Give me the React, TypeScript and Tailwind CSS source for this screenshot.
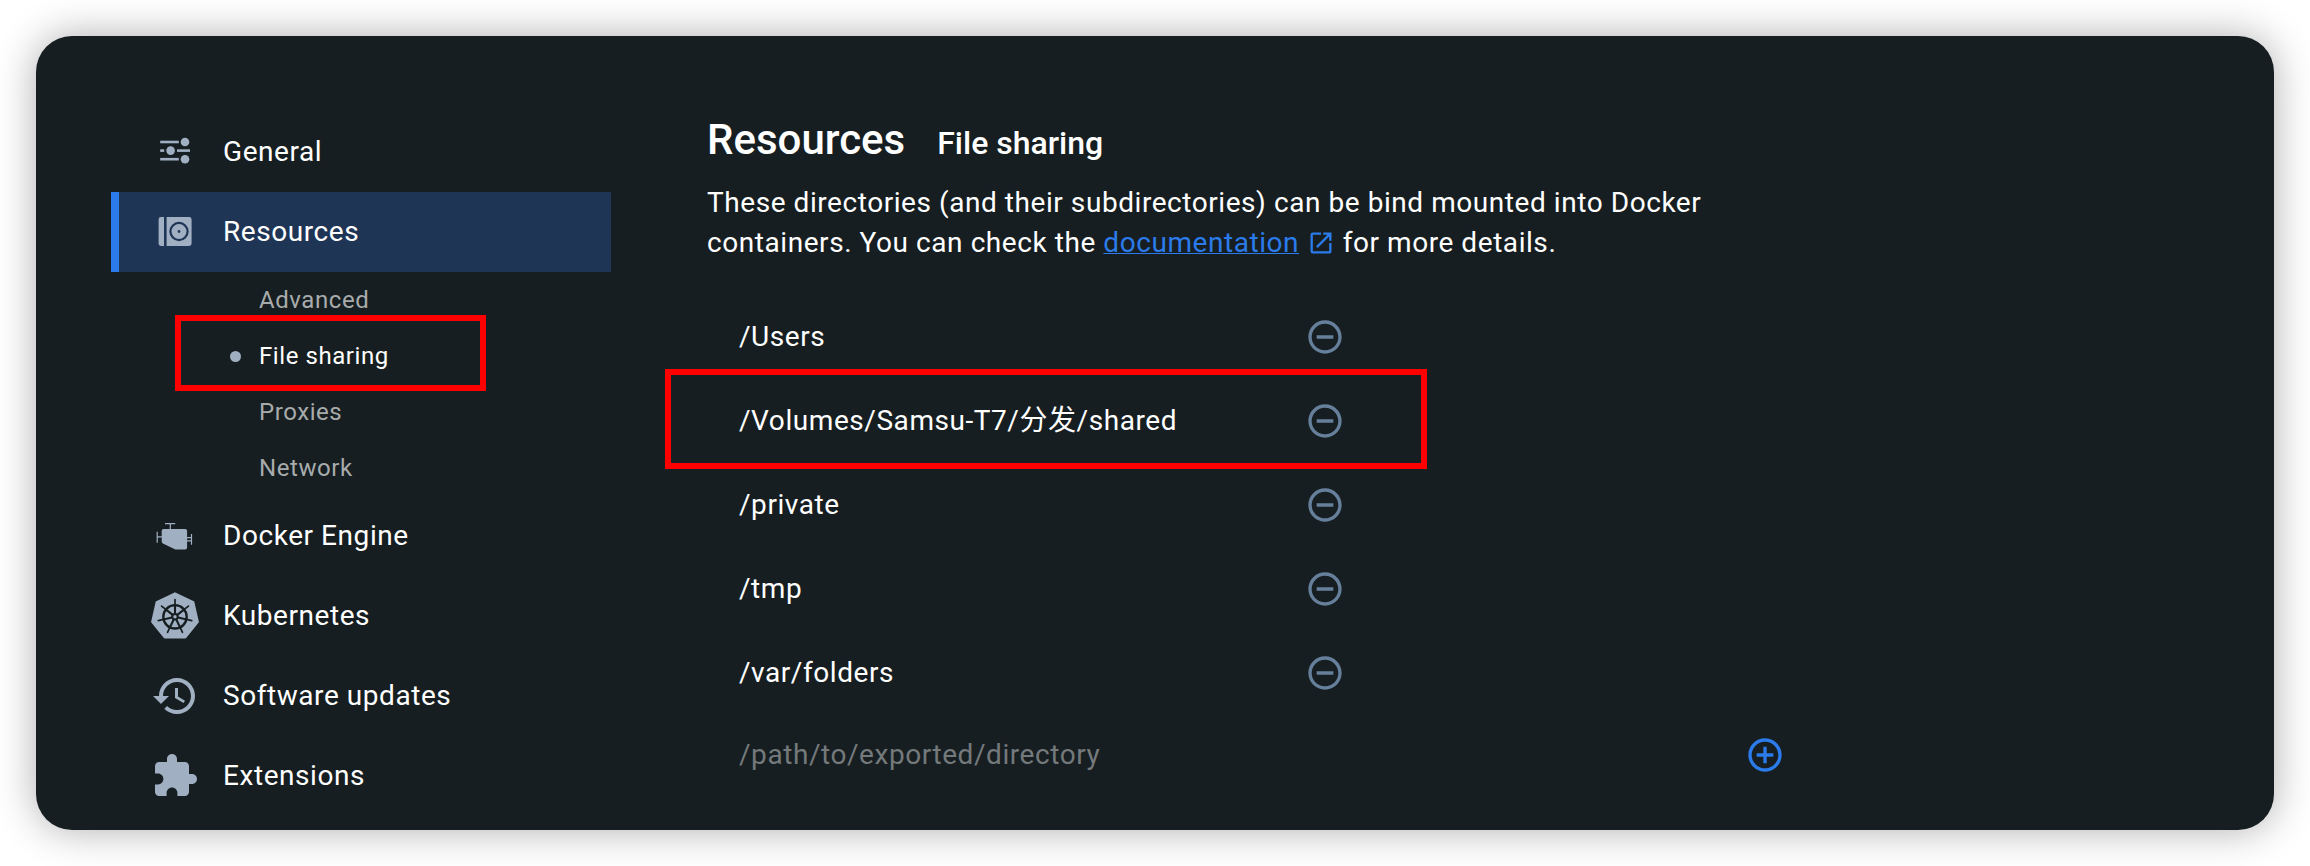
import type { ReactNode } from "react";
import { MdAddCircleOutline, MdOpenInNew, MdRemoveCircleOutline } from "react-icons/md";

function TuneIcon() {
  return (
    <svg viewBox="0 0 48 48" className="size-12" fill="currentColor">
      <rect x="9.2" y="12.7" width="18.6" height="2.6" />
      <circle cx="34" cy="14" r="4.3" />
      <rect x="9.2" y="21.3" width="4" height="2.6" />
      <circle cx="19.6" cy="22.6" r="4.3" />
      <rect x="26" y="21.3" width="13" height="2.6" />
      <rect x="9.2" y="29.9" width="18.6" height="2.6" />
      <circle cx="34" cy="31.2" r="4.3" />
    </svg>
  );
}

function DiskIcon() {
  return (
    <svg viewBox="0 0 48 48" className="size-12" fill="currentColor">
      <path d="M13 9.1V38H10a2.4 2.4 0 0 1-2.4-2.4V11.5A2.4 2.4 0 0 1 10 9.1Z" />
      <path
        fillRule="evenodd"
        d="M15.6 9.1h22.6a2.4 2.4 0 0 1 2.4 2.4v24.1a2.4 2.4 0 0 1-2.4 2.4H15.6ZM28 13.8a9.7 9.7 0 1 0 0 19.4a9.7 9.7 0 1 0 0-19.4Z"
      />
      <path
        fillRule="evenodd"
        d="M28 16a7.5 7.5 0 1 0 0 15a7.5 7.5 0 1 0 0-15ZM28 22.1a1.4 1.4 0 1 1 0 2.8a1.4 1.4 0 1 1 0-2.8Z"
      />
    </svg>
  );
}

function EngineIcon() {
  return (
    <svg viewBox="0 -8 48 48" className="size-12">
      <path
        fill="currentColor"
        d="M12.6 9h21.6a1.9 1.9 0 0 1 1.9 1.9v16.6a1.9 1.9 0 0 1-1.9 1.9H24.5a3 3 0 0 1-1.2-.3L11.9 23.4a2 2 0 0 1-1.2-1.8V10.9A1.9 1.9 0 0 1 12.6 9Z"
      />
      <path
        fill="none"
        stroke="currentColor"
        strokeWidth="1.2"
        d="M14 3.6H24.2M19.3 3.6V9.5M6.2 11.8V22.8M6.2 16.8H11M40.5 14V24.7M36 17.6H40.5M36 20.8H40.5"
      />
    </svg>
  );
}

const spokes = [0, 1, 2, 3, 4, 5, 6];

function KubernetesIcon() {
  return (
    <svg viewBox="0 0 48 48" className="size-12">
      <path
        d="M24 2.2L42.4 11L46.9 30.8L34.4 46.3H13.6L1.1 30.8L5.6 11Z"
        transform="translate(0 -.9)"
        fill="currentColor"
        stroke="currentColor"
        strokeWidth="2"
        strokeLinejoin="round"
      />
      <g stroke="#161e21" fill="none">
        <circle cx="24" cy="24.8" r="11.7" strokeWidth="2.4" />
        {spokes.map((i) => (
          <g key={i} transform={`rotate(${(i * 360) / 7} 24 24.8)`}>
            <path d="M24 22.6V13" strokeWidth="2.1" />
            <path d="M24 13V7.6" strokeWidth="1.7" strokeLinecap="round" />
          </g>
        ))}
      </g>
      <circle cx="24" cy="24.8" r="3.7" fill="#161e21" />
      <circle cx="24" cy="24.8" r="1.7" fill="currentColor" />
    </svg>
  );
}

function HistoryIcon() {
  return (
    <svg viewBox="0 0 24 24" className="size-12" fill="currentColor">
      <path d="M13 3c-4.97 0-9 4.03-9 9H1l3.89 3.89.07.14L9 12H6c0-3.87 3.13-7 7-7s7 3.13 7 7-3.13 7-7 7c-1.93 0-3.68-.79-4.94-2.06l-1.42 1.42C8.27 19.99 10.51 21 13 21c4.97 0 9-4.03 9-9s-4.03-9-9-9zm-1 5v5l4.28 2.54.72-1.21-3.5-2.08V8H12z" />
    </svg>
  );
}

function ExtensionIcon() {
  return (
    <svg viewBox="0 0 24 24" className="size-12" fill="currentColor">
      <path d="M20.5 11H19V7c0-1.1-.9-2-2-2h-4V3.5C13 2.12 11.88 1 10.5 1S8 2.12 8 3.5V5H4c-1.1 0-1.99.9-1.99 2v3.8H3.5c1.49 0 2.7 1.21 2.7 2.7s-1.21 2.7-2.7 2.7H2V20c0 1.1.9 2 2 2h3.8v-1.5c0-1.49 1.21-2.7 2.7-2.7 1.49 0 2.7 1.21 2.7 2.7V22H17c1.1 0 2-.9 2-2v-4h1.5c1.38 0 2.5-1.12 2.5-2.5S21.88 11 20.5 11z" />
    </svg>
  );
}

function NavItem({ icon, label, active = false }: { icon: ReactNode; label: string; active?: boolean }) {
  return (
    <a
      className={`flex h-20 items-center gap-6 border-l-8 pl-8 leading-[34px] ${
        active ? "border-[#2b7bea] bg-[#1e3555]" : "border-transparent"
      }`}
    >
      <span className="text-[#a0b0c2]">{icon}</span>
      {label}
    </a>
  );
}

function SubItem({ label, active = false }: { label: string; active?: boolean }) {
  return (
    <a
      className={`relative flex h-14 items-center pl-[118px] text-2xl leading-7 tracking-[0.57px] ${
        active ? "text-white" : "text-[#a8abac]"
      }`}
    >
      <span className="w-[30px]">
        {active && <span className="ml-px block size-[11px] rounded-full bg-[#a0b0c2]" />}
      </span>
      {label}
      {active && (
        <span className="absolute top-[-13px] left-16 h-[76px] w-[311px] border-6 border-[#ff0000]" />
      )}
    </a>
  );
}

const directories = ["/Users", "/Volumes/Samsu-T7/分发/shared", "/private", "/tmp", "/var/folders"];

export default function App() {
  return (
    <div className="h-[866px] w-[2310px] overflow-hidden bg-white p-9 font-['Roboto','Noto_Sans_CJK_SC',sans-serif] text-[28px] tracking-[0.56px] text-white">
      <div className="flex h-[794px] w-[2238px] rounded-[36px] bg-[#161e21] shadow-[0_0_40px_rgba(0,0,0,0.32)]">
        <nav className="ml-[75px] w-[500px] shrink-0 pt-[76px]">
          <NavItem icon={<TuneIcon />} label="General" />
          <NavItem icon={<DiskIcon />} label="Resources" active />
          <SubItem label="Advanced" />
          <SubItem label="File sharing" active />
          <SubItem label="Proxies" />
          <SubItem label="Network" />
          <NavItem icon={<EngineIcon />} label="Docker Engine" />
          <NavItem icon={<KubernetesIcon />} label="Kubernetes" />
          <NavItem icon={<HistoryIcon />} label="Software updates" />
          <NavItem icon={<ExtensionIcon />} label="Extensions" />
        </nav>
        <main className="ml-24 w-[1080px] pt-[79px]">
          <div className="flex h-[68px] items-baseline gap-8 font-medium tracking-normal">
            <h1 className="text-[42px] leading-[49px]">Resources</h1>
            <h2 className="text-[32px] leading-[38px]">File sharing</h2>
          </div>
          <p className="leading-10 whitespace-nowrap">
            These directories (and their subdirectories) can be bind mounted into Docker
            <br />
            containers. You can check the{" "}
            <a className="text-[#2b7bea] underline decoration-1 underline-offset-1">documentation</a>
            <MdOpenInNew className="ml-2 inline-block size-7 align-[-5px] text-[#2b7bea]" /> for more details.
          </p>
          <ul className="mt-8">
            {directories.map((dir) => (
              <li key={dir} className="relative flex h-[84px] items-center pl-8 leading-[34px]">
                <span className="w-[566px]">{dir}</span>
                <MdRemoveCircleOutline className="size-10 text-[#66809c]" />
                {dir.startsWith("/Volumes") && (
                  <span className="absolute top-[-10px] -left-[42px] h-[100px] w-[762px] border-6 border-[#ff0000]" />
                )}
              </li>
            ))}
          </ul>
          <div className="flex h-20 items-center pl-8 leading-[34px]">
            <span className="w-[1006px] text-[#74797b]">/path/to/exported/directory</span>
            <MdAddCircleOutline className="size-10 text-[#2b7bea]" />
          </div>
        </main>
      </div>
    </div>
  );
}
